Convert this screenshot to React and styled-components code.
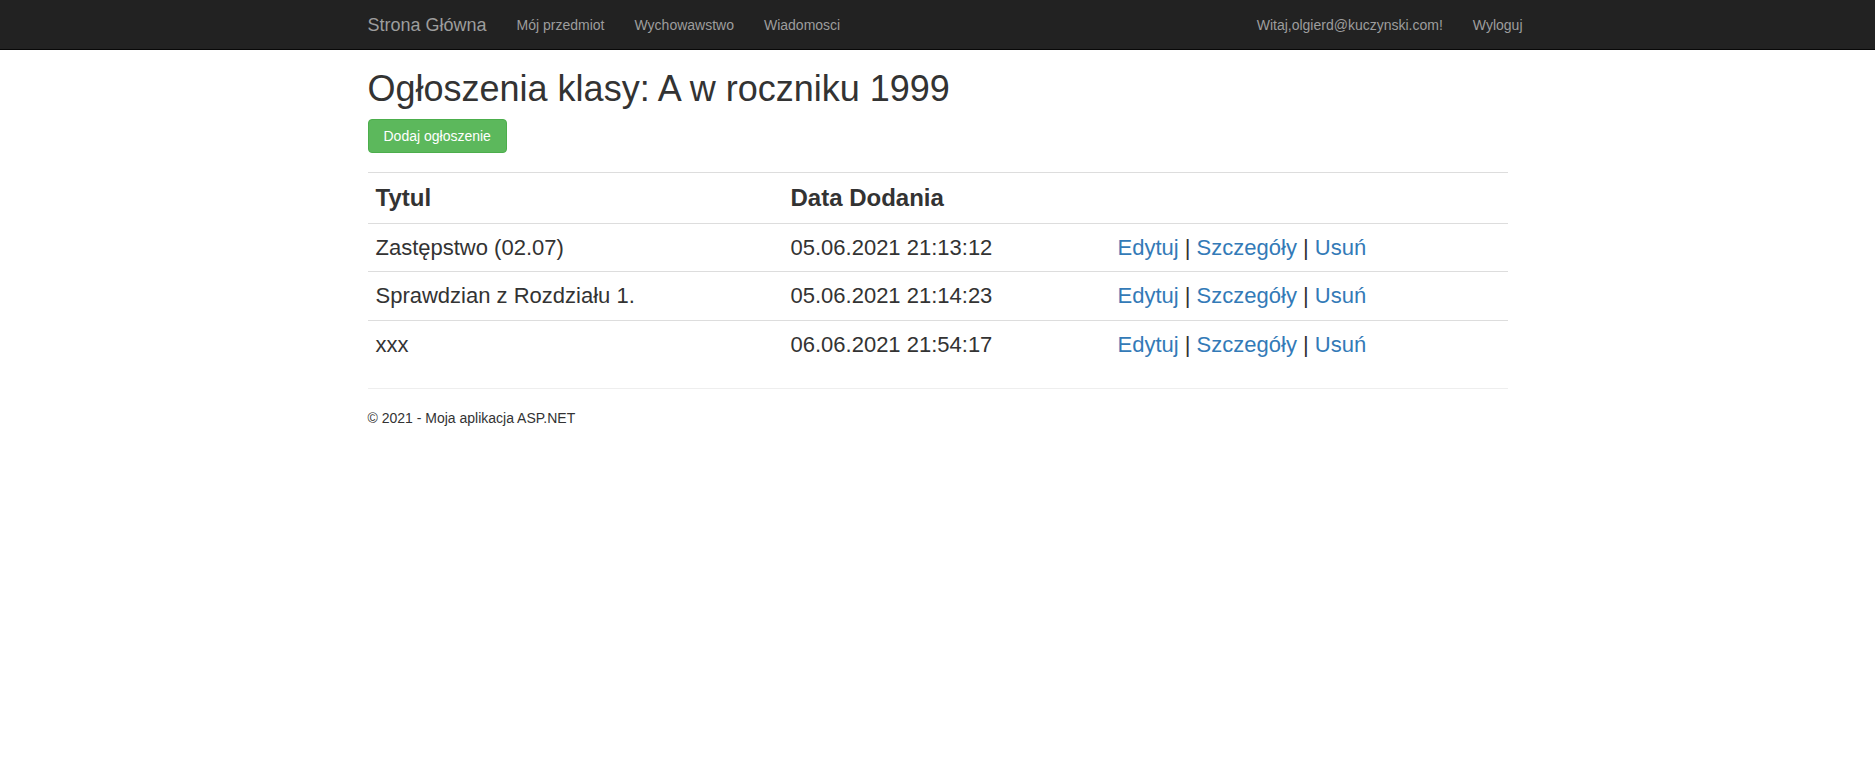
import React from "react";
import styled, { createGlobalStyle } from "styled-components";

const GlobalStyle = createGlobalStyle`
  html, body { margin: 0; padding: 0; background: #fff; }
  body {
    font-family: "Liberation Sans", Arial, Helvetica, sans-serif;
    font-size: 14px;
    line-height: 1.42857143;
    color: #333;
  }
  * { box-sizing: border-box; }
`;

const Navbar = styled.nav`
  height: 50px;
  background: #222;
  border-bottom: 1px solid #080808;
`;

const NavContainer = styled.div`
  width: 1170px;
  margin: 0 auto;
  padding: 0 15px;
  display: flex;
  justify-content: space-between;
  align-items: flex-start;
`;

const NavGroup = styled.div`
  display: flex;
  margin-left: ${(p) => p.$ml || "0"};
  margin-right: ${(p) => p.$mr || "0"};
`;

const Brand = styled.a`
  display: block;
  height: 49px;
  padding: 15px;
  font-size: 18px;
  line-height: 20px;
  color: #9d9d9d;
  text-decoration: none;
`;

const NavLink = styled.a`
  display: block;
  padding: 15px;
  font-size: 14px;
  line-height: 20px;
  color: #9d9d9d;
  text-decoration: none;
`;

const Container = styled.main`
  width: 1170px;
  margin: 0 auto;
  padding: 0 15px;
`;

const Title = styled.h1`
  margin: 19px 0 10px;
  font-size: 36px;
  font-weight: 400;
  line-height: 1.1;
  color: #333;
`;

const ActionBar = styled.p`
  margin: 0 0 19px;
  height: 34px;
`;

const SuccessButton = styled.a`
  display: inline-block;
  padding: 6px 15px;
  font-size: 14px;
  line-height: 20px;
  color: #fff;
  background: #5cb85c;
  border: 1px solid #4cae4c;
  border-radius: 4px;
  text-decoration: none;
`;

const Table = styled.table`
  width: 100%;
  border-collapse: collapse;
  border-spacing: 0;
  table-layout: fixed;
  margin-bottom: 20px;
`;

const Col = styled.col`
  width: ${(p) => p.$w || "auto"};
`;

const HeadCell = styled.th`
  padding: 8px;
  border-top: 1px solid #ddd;
  text-align: left;
  vertical-align: top;
  font-size: 24px;
  font-weight: 700;
  line-height: 1.42857143;
  color: #333;
`;

const Cell = styled.td`
  padding: 8px;
  border-top: 1px solid #ddd;
  vertical-align: top;
  font-size: 22px;
  line-height: 1.42857143;
  color: #333;
  white-space: nowrap;
`;

const ActionLink = styled.a`
  color: #337ab7;
  text-decoration: none;
`;

const Rule = styled.hr`
  margin: 20px 0 19px;
  border: 0;
  border-top: 1px solid #eee;
  height: 0;
`;

const Footer = styled.footer`
  p {
    margin: 0 0 10px;
    font-size: 14px;
    line-height: 20px;
    color: #333;
  }
`;

const rows = [
  { title: "Zastępstwo (02.07)", date: "05.06.2021 21:13:12" },
  { title: "Sprawdzian z Rozdziału 1.", date: "05.06.2021 21:14:23" },
  { title: "xxx", date: "06.06.2021 21:54:17" },
];

export default function App() {
  return (
    <>
      <GlobalStyle />
      <Navbar>
        <NavContainer>
          <NavGroup $ml="-15px">
            <Brand href="#">Strona Główna</Brand>
            <NavLink href="#">Mój przedmiot</NavLink>
            <NavLink href="#">Wychowawstwo</NavLink>
            <NavLink href="#">Wiadomosci</NavLink>
          </NavGroup>
          <NavGroup $mr="-30px">
            <NavLink href="#">Witaj,olgierd@kuczynski.com!</NavLink>
            <NavLink href="#">Wyloguj</NavLink>
          </NavGroup>
        </NavContainer>
      </Navbar>
      <Container>
        <Title>Ogłoszenia klasy: A w roczniku 1999</Title>
        <ActionBar>
          <SuccessButton href="#">Dodaj ogłoszenie</SuccessButton>
        </ActionBar>
        <Table>
          <colgroup>
            <Col $w="415px" />
            <Col $w="327px" />
            <Col />
          </colgroup>
          <tbody>
            <tr>
              <HeadCell>Tytul</HeadCell>
              <HeadCell>Data Dodania</HeadCell>
              <HeadCell></HeadCell>
            </tr>
            {rows.map((r) => (
              <tr key={r.date}>
                <Cell>{r.title}</Cell>
                <Cell>{r.date}</Cell>
                <Cell>
                  <ActionLink href="#">Edytuj</ActionLink> |{" "}
                  <ActionLink href="#">Szczegóły</ActionLink> |{" "}
                  <ActionLink href="#">Usuń</ActionLink>
                </Cell>
              </tr>
            ))}
          </tbody>
        </Table>
        <Rule />
        <Footer>
          <p>© 2021 - Moja aplikacja ASP.NET</p>
        </Footer>
      </Container>
    </>
  );
}
